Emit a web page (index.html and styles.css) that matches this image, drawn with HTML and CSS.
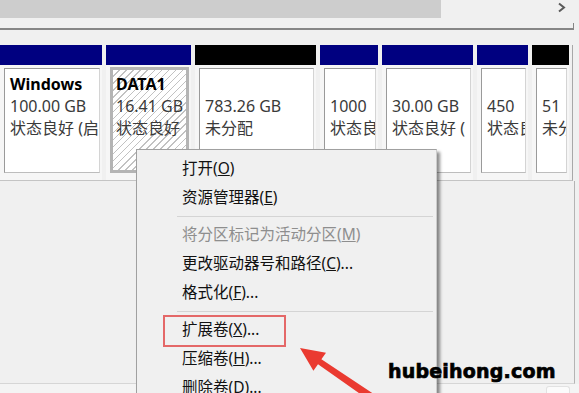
FILE: index.html
```html
<!DOCTYPE html>
<html lang="zh-CN">
<head>
  <meta charset="UTF-8">
  <meta name="viewport" content="width=device-width, initial-scale=1.0">
  <title>磁盘管理</title>
  <link rel="stylesheet" href="styles.css">
</head>
<body>
  <div class="screen">
    <div class="hscroll">
      <div class="thumb"></div>
      <div class="track">
        <svg class="chevron" width="10" height="11" viewBox="0 0 10 11"><polyline points="2,1.5 7,5.5 2,9.5"/></svg>
      </div>
    </div>
    <div class="divider"></div>

    <div class="disk-row">
      <div class="part p-win">
        <div class="bar"></div>
        <div class="cell"><b>Windows</b><br>100.00 GB<br>状态良好 (启</div>
      </div>
      <div class="part p-data">
        <div class="bar"></div>
        <div class="cell selected"><b>DATA1</b><br>16.41 GB<br>状态良好</div>
      </div>
      <div class="part p-free">
        <div class="bar black"></div>
        <div class="cell">&nbsp;<br>783.26 GB<br>未分配</div>
      </div>
      <div class="part p-rec">
        <div class="bar"></div>
        <div class="cell">&nbsp;<br>1000<br>状态良</div>
      </div>
      <div class="part p-sys">
        <div class="bar"></div>
        <div class="cell">&nbsp;<br>30.00 GB<br>状态良好 (</div>
      </div>
      <div class="part p-rec2">
        <div class="bar"></div>
        <div class="cell">&nbsp;<br>450<br>状态良</div>
      </div>
      <div class="part p-free2">
        <div class="bar black"></div>
        <div class="cell">&nbsp;<br>51<br>未分</div>
      </div>
    </div>

    <div class="lower"></div>
    <div class="status"><span class="tray"></span></div>

    <!-- 右键菜单 -->
    <div class="context-menu">
      <div class="item">打开(<u>O</u>)</div>
      <div class="item">资源管理器(<u>E</u>)</div>
      <div class="sep"></div>
      <div class="item disabled">将分区标记为活动分区(<u>M</u>)</div>
      <div class="item">更改驱动器号和路径(<u>C</u>)...</div>
      <div class="item">格式化(<u>F</u>)...</div>
      <div class="sep"></div>
      <div class="item">扩展卷(<u>X</u>)...</div>
      <div class="item">压缩卷(<u>H</u>)...</div>
      <div class="item">删除卷(<u>D</u>)...</div>
    </div>

    <div class="highlight"></div>

    <svg class="arrow" width="579" height="393" viewBox="0 0 579 393">
      <polygon points="300,348 326,352.7 321.4,359.2 382.3,399.7 377.7,406.3 318,364.2 313.4,370.7"/>
    </svg>

    <div class="watermark">hubeihong.com</div>
  </div>
</body>
</html>
```
FILE: styles.css
```css
* {
  box-sizing: border-box;
}

body {
  margin: 0;
  background: #f0f0f0;
  font-family: "Noto Sans", "Noto Sans CJK SC", sans-serif;
  color: #000;
}

.screen {
  position: relative;
  width: 579px;
  height: 393px;
  overflow: hidden;
  display: flex;
  flex-direction: column;
}

/* barra de rolagem horizontal */
.hscroll {
  display: flex;
  height: 18px;
  flex-shrink: 0;
}

.thumb {
  width: 441px;
  background: #cdcdcd;
}

.track {
  flex: 1;
  display: flex;
  justify-content: flex-end;
  padding: 2px 12px 0 0;
}

.chevron polyline {
  fill: none;
  stroke: #5a5a5a;
  stroke-width: 2;
}

.divider {
  margin-top: 5px;
  height: 7px;
  width: 574px;
  flex-shrink: 0;
  border-bottom: 2px solid #868686;
  border-right: 1px solid #868686;
}

/* linha do disco */
.disk-row {
  margin-top: 15px;
  display: flex;
  gap: 4px;
  height: 136px;
  width: 573px;
  flex-shrink: 0;
  border-right: 1px solid #a8a8a8;
  border-bottom: 1px solid #c4c4c4;
}

.part {
  display: flex;
  flex-direction: column;
  background: #f6f6f6;
}

.p-win { width: 102px; }
.p-data { width: 85px; }
.p-free { width: 121px; }
.p-rec { width: 58px; }
.p-sys { width: 91px; }
.p-rec2 { width: 51px; }
.p-free2 { width: 37px; }

.bar {
  height: 20px;
  background: #000080;
}

.bar.black {
  background: #000;
}

.cell {
  margin: 3px 2px 0 4px;
  height: 105px;
  background: #fff;
  border: 1px solid;
  border-color: #9a9a9a #d4d4d4 #bdbdbd #9a9a9a;
  padding: 4px 0 0 5px;
  font-size: 16px;
  line-height: 22px;
  color: #3a3a3a;
  white-space: nowrap;
  overflow: hidden;
}

.cell b {
  color: #000;
}

.cell.selected {
  margin-top: 2px;
  height: 106px;
  border: 3px solid #b4b4b4;
  padding: 3px 0 0 3px;
  background: repeating-linear-gradient(135deg, #fff 0 4px, #c2c2c2 4px 5px);
}

.lower {
  width: 575px;
  height: 203px;
  flex-shrink: 0;
  border-right: 1px solid #b4b4b4;
  border-bottom: 1px solid #d6d6d6;
}

.status {
  flex: 1;
  display: flex;
  justify-content: flex-end;
  align-items: flex-end;
  padding-right: 9px;
  background: #f4f4f4;
}

.tray {
  width: 24px;
  height: 7px;
  background: #fbfbfb;
  border-radius: 3px 3px 0 0;
  border: 1px solid #e2e2e2;
  border-bottom: none;
}

/* menu de contexto */
.context-menu {
  position: absolute;
  left: 136px;
  top: 149px;
  width: 301px;
  background: #f0f0f0;
  border: 1px solid #a0a0a0;
  border-right-color: #cccccc;
  border-bottom: none;
  box-shadow: 3px 3px 3px rgba(0, 0, 0, 0.45);
  padding-top: 4px;
  font-size: 15.5px;
  color: #111;
}

.item {
  height: 29px;
  line-height: 29px;
  padding-left: 45px;
  white-space: nowrap;
}

.item.disabled {
  color: #8e8e8e;
}

.sep {
  height: 1px;
  margin: 3.5px 3px 3.5px 40px;
  background: #d4d4d4;
}

.highlight {
  position: absolute;
  left: 163px;
  top: 315px;
  width: 123px;
  height: 32px;
  border: 2px solid #e46868;
}

.arrow {
  position: absolute;
  left: 0;
  top: 0;
  pointer-events: none;
}

.arrow polygon {
  fill: #ea3a30;
}

.watermark {
  position: absolute;
  left: 388px;
  top: 362px;
  font-family: "DejaVu Sans", sans-serif;
  font-weight: bold;
  font-size: 19px;
  line-height: 19px;
  letter-spacing: 0.2px;
  color: #000;
  -webkit-text-stroke: 0.7px #000;
}
```
